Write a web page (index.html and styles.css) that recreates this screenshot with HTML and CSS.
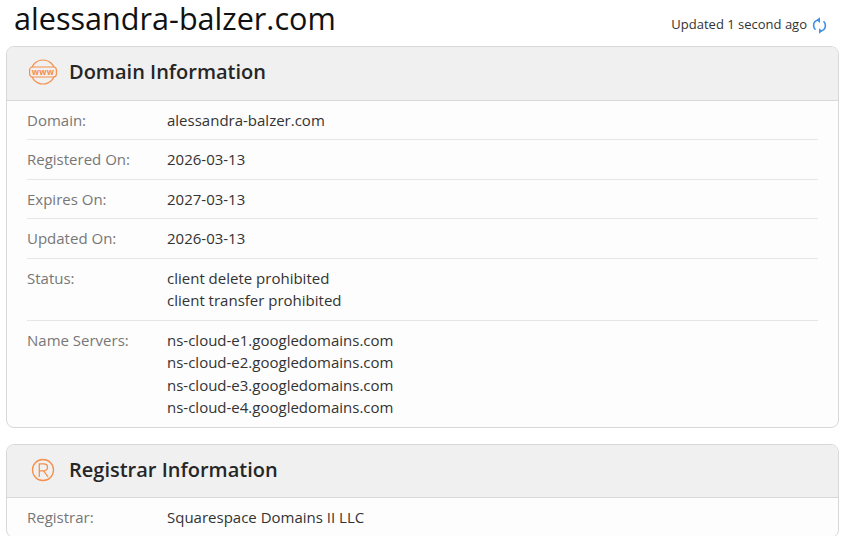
FILE: index.html
```html
<!DOCTYPE html>
<html lang="en">
<head>
<meta charset="utf-8">
<title>alessandra-balzer.com</title>
<link rel="stylesheet" href="styles.css">
</head>
<body>
<header class="top">
  <h1 class="site">alessandra-balzer.com</h1>
  <div class="updated">
    <span>Updated 1 second ago</span>
    <svg class="refresh" viewBox="0 0 16 20" width="15" height="19" fill="none" stroke="#3f8fe8" stroke-width="1.700">
      <path d="M7 4.200C3.800 4.600 1.700 7 1.700 10c0 1.800.8 3.400 2 4.500"/>
      <path d="M9 15.800c3.200-.4 5.300-2.800 5.300-5.800 0-1.800-.8-3.400-2-4.500"/>
      <path d="M8.500 1.200 4.800 4.200 8.500 7.200z" fill="#3f8fe8" stroke="none"/>
      <path d="M7.500 12.800 11.200 15.800 7.500 18.800z" fill="#3f8fe8" stroke="none"/>
    </svg>
  </div>
</header>

<section class="card">
  <div class="card-head">
    <svg class="icon" viewBox="0 0 30 26" width="30" height="26" fill="none" stroke="#f58f4b" stroke-width="1.200">
      <circle cx="15" cy="13" r="12"/>
      <rect x="1.600" y="8" width="26.800" height="10" rx="3" fill="#f0f0f0"/>
      <text class="www" x="15" y="15.800" text-anchor="middle">www</text>
    </svg>
    <h2 class="card-title">Domain Information</h2>
  </div>
  <div class="rows">
    <div class="row"><div class="label">Domain:</div><div class="value">alessandra-balzer.com</div></div>
    <div class="row"><div class="label">Registered On:</div><div class="value">2026-03-13</div></div>
    <div class="row"><div class="label">Expires On:</div><div class="value">2027-03-13</div></div>
    <div class="row"><div class="label">Updated On:</div><div class="value">2026-03-13</div></div>
    <div class="row"><div class="label">Status:</div><div class="value">client delete prohibited<br>client transfer prohibited</div></div>
    <div class="row"><div class="label">Name Servers:</div><div class="value">ns-cloud-e1.googledomains.com<br>ns-cloud-e2.googledomains.com<br>ns-cloud-e3.googledomains.com<br>ns-cloud-e4.googledomains.com</div></div>
  </div>
</section>

<section class="card">
  <div class="card-head">
    <svg class="icon" viewBox="0 0 30 26" width="30" height="26" fill="none" stroke="#f58f4b" stroke-width="1.300">
      <circle cx="15" cy="13" r="10.500"/>
      <path d="M11.300 20V6.800h4.400c2.500 0 3.800 1.400 3.800 3.500s-1.300 3.500-3.800 3.500h-4.400M15.700 13.800 20 20" stroke-width="1.300"/>
    </svg>
    <h2 class="card-title">Registrar Information</h2>
  </div>
  <div class="rows">
    <div class="row"><div class="label">Registrar:</div><div class="value">Squarespace Domains II LLC</div></div>
  </div>
</section>
</body>
</html>
```
FILE: styles.css
```css
html, body {
  margin: 0;
  padding: 0;
  background: #fff;
  height: 536px;
  overflow: hidden;
}
body {
  font-family: "Open Sans", sans-serif;
  color: #2b2b2b;
  padding: 0 11px 0 6px;
}
.top {
  height: 46px;
  display: flex;
  justify-content: space-between;
  align-items: flex-start;
}
.site {
  margin: 0 0 0 8px;
  font-size: 30.600px;
  line-height: 36px;
  font-weight: 400;
  color: #111;
}
.updated {
  display: flex;
  align-items: flex-start;
  gap: 5px;
  font-size: 13px;
  line-height: 20px;
  margin-top: 13.500px;
  margin-right: 12px;
  color: #333;
}
.refresh {
  display: block;
  margin-top: 2px;
}
.card {
  border: 1px solid #d8d8d8;
  border-radius: 8px;
  background: #fdfdfd;
  margin-bottom: 16px;
  overflow: hidden;
}
.card-head {
  height: 50.600px;
  padding: 0 0 2px 21px;
  background: #f0f0f0;
  border-bottom: 1px solid #d8d8d8;
  display: flex;
  align-items: center;
  gap: 11px;
}
.icon {
  display: block;
  flex: none;
}
.www {
  font-family: "Open Sans", sans-serif;
  font-size: 8.500px;
  font-weight: 700;
  fill: #f58f4b;
  stroke: none;
  letter-spacing: .2px;
}
.card-title {
  margin: 0;
  font-size: 20px;
  font-weight: 600;
  line-height: 28px;
  color: #262626;
}
.rows {
  padding: 0 20px;
}
.row {
  display: flex;
  padding: 8px 0;
  border-top: 1px solid #e6e6e6;
  font-size: 15px;
  line-height: 22.500px;
}
.row:first-child {
  border-top: 0;
}
.label {
  width: 140px;
  flex: none;
  color: #777;
}
.value {
  color: #333;
}
```
